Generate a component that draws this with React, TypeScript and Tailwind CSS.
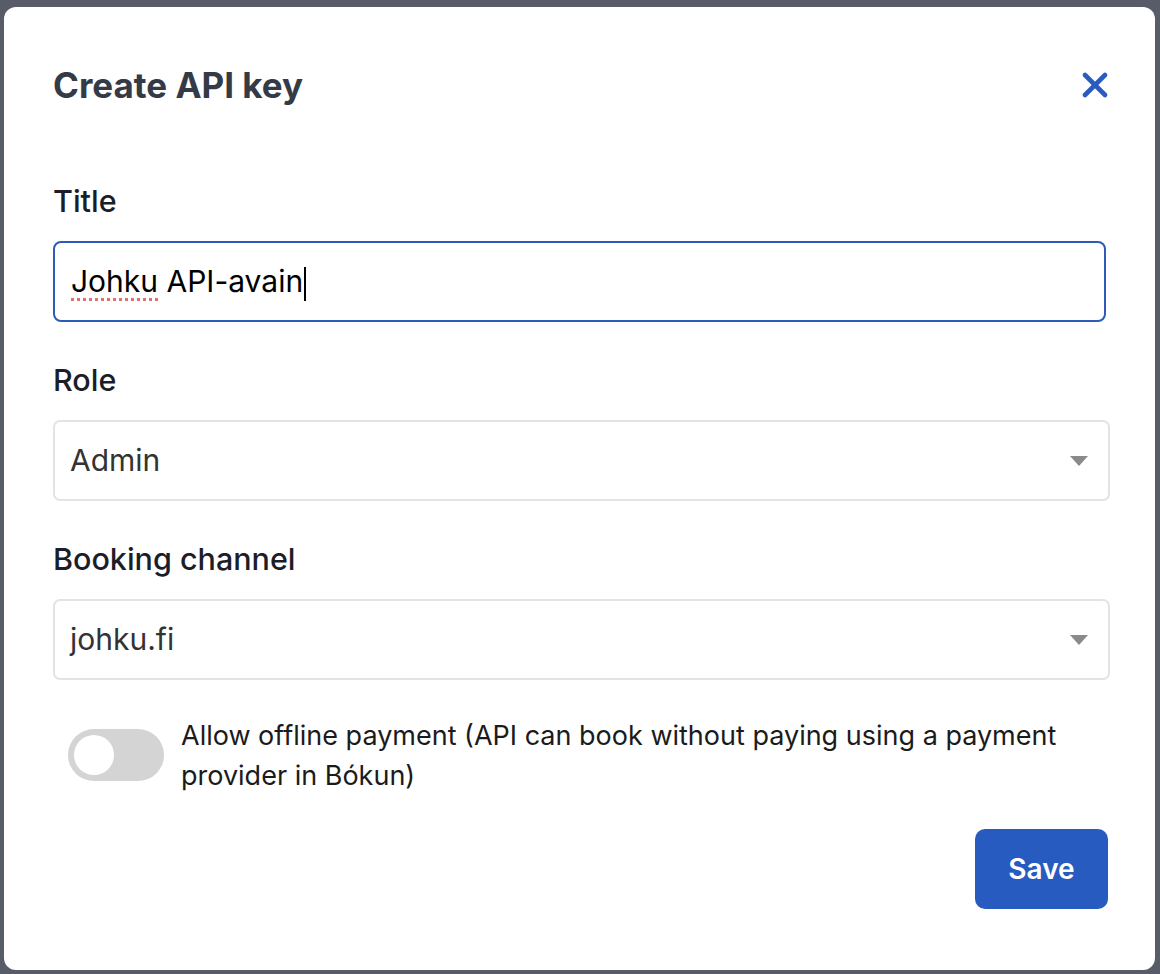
import { X } from "lucide-react";

function Caret() {
  return (
    <svg width="18" height="10" viewBox="0 0 18 10" className="shrink-0">
      <path d="M0 0h18L9 10z" fill="#8a8a8a" />
    </svg>
  );
}

function SelectBox({ value }: { value: string }) {
  return (
    <div className="flex items-center justify-between h-[81px] rounded-[7px] border-2 border-[#e3e3e3] pl-[15px] pr-[20px]">
      <span className="text-[30px] text-[#333]">{value}</span>
      <Caret />
    </div>
  );
}

function Label({ children }: { children: React.ReactNode }) {
  return <div className="text-[30.5px] leading-[34px] font-medium text-[#1b1d29]">{children}</div>;
}

export default function App() {
  return (
    <div className="w-[1160px] h-[974px] bg-[#585c68] pt-[7px] pl-[4px] font-['Inter',sans-serif]">
      <div className="w-[1151px] h-[963px] bg-white rounded-[12px] pl-[49px] pr-[45px] pt-[58px]">
        <div className="flex items-center justify-between pr-[1px]">
          <h1 className="text-[35px] leading-[40px] font-bold text-[#353a47]">Create API key</h1>
          <X size={40} strokeWidth={2.8} color="#2a5cc0" className="mr-[-6px]" />
        </div>

        <div className="mt-[79px]">
          <Label>Title</Label>
          <div className="mt-[23px] mr-[4px] h-[81px] rounded-[8px] border-2 border-[#2e5bb5] flex items-center pl-[16px]">
            <span className="text-[30px] text-black relative">
              <span className="underline decoration-dotted decoration-[#e07070] decoration-[3px] underline-offset-[6px]">Johku</span>{" "}
              API-avain
              <span className="inline-block w-[2px] h-[34px] bg-black align-middle ml-[1px]" />
            </span>
          </div>
        </div>

        <div className="mt-[41px]">
          <Label>Role</Label>
          <div className="mt-[23px]">
            <SelectBox value="Admin" />
          </div>
        </div>

        <div className="mt-[41px]">
          <Label>Booking channel</Label>
          <div className="mt-[23px]">
            <SelectBox value="johku.fi" />
          </div>
        </div>

        <div className="mt-[36px] flex items-start gap-[17px] pl-[15px]">
          <div className="mt-[13px] w-[96px] h-[52px] rounded-full bg-[#d4d4d4] p-[6px] shrink-0">
            <div className="w-[40px] h-[40px] rounded-full bg-white" />
          </div>
          <p className="text-[27px] leading-[40px] text-[#1b1b1b]">
            Allow offline payment (API can book without paying using a payment provider in Bókun)
          </p>
        </div>

        <div className="mt-[33px] flex justify-end pr-[2px]">
          <button className="w-[133px] h-[80px] rounded-[10px] bg-[#285bc0] text-white text-[28px] font-semibold">
            Save
          </button>
        </div>
      </div>
    </div>
  );
}
